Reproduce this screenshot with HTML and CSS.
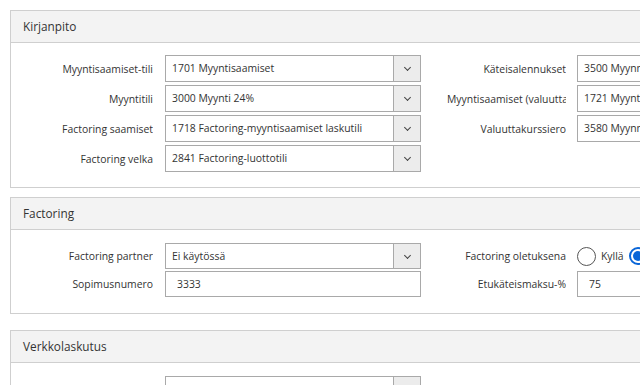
FILE: index.html
```html
<!DOCTYPE html>
<html lang="fi">
<head>
  <meta charset="UTF-8">
  <meta name="viewport" content="width=device-width, initial-scale=1.0">
  <title>Asetukset</title>
  <link rel="stylesheet" href="styles.css">
</head>
<body>
  <div class="settings">

    <!-- Kirjanpito -->
    <div class="panel">
      <div class="panel-header">Kirjanpito</div>
      <div class="panel-body">
        <div class="col">
          <div class="row">
            <label class="lbl">Myyntisaamiset-tili</label>
            <div class="select"><span class="value">1701 Myyntisaamiset</span><span class="caret"></span></div>
          </div>
          <div class="row">
            <label class="lbl">Myyntitili</label>
            <div class="select"><span class="value">3000 Myynti 24%</span><span class="caret"></span></div>
          </div>
          <div class="row">
            <label class="lbl">Factoring saamiset</label>
            <div class="select"><span class="value">1718 Factoring-myyntisaamiset laskutili</span><span class="caret"></span></div>
          </div>
          <div class="row">
            <label class="lbl">Factoring velka</label>
            <div class="select"><span class="value">2841 Factoring-luottotili</span><span class="caret"></span></div>
          </div>
        </div>
        <div class="col col-right">
          <div class="row">
            <label class="lbl">Käteisalennukset</label>
            <div class="select"><span class="value">3500 Myynn</span></div>
          </div>
          <div class="row">
            <label class="lbl">Myyntisaamiset (valuutta</label>
            <div class="select"><span class="value">1721 Myynt</span></div>
          </div>
          <div class="row">
            <label class="lbl">Valuuttakurssiero</label>
            <div class="select"><span class="value">3580 Myynn</span></div>
          </div>
        </div>
      </div>
    </div>

    <!-- Factoring -->
    <div class="panel">
      <div class="panel-header">Factoring</div>
      <div class="panel-body body-factoring">
        <div class="col">
          <div class="row">
            <label class="lbl">Factoring partner</label>
            <div class="select"><span class="value">Ei käytössä</span><span class="caret"></span></div>
          </div>
          <div class="row">
            <label class="lbl">Sopimusnumero</label>
            <input class="text-input" type="text" value="3333">
          </div>
        </div>
        <div class="col col-right">
          <div class="row">
            <label class="lbl">Factoring oletuksena</label>
            <div class="radios">
              <span class="radio"></span><span class="radio-text">Kyllä</span>
              <span class="radio checked"></span>
            </div>
          </div>
          <div class="row">
            <label class="lbl">Etukäteismaksu-%</label>
            <input class="text-input" type="text" value="75">
          </div>
        </div>
      </div>
    </div>

    <!-- Verkkolaskutus -->
    <div class="panel panel-last">
      <div class="panel-header">Verkkolaskutus</div>
      <div class="panel-body body-verkko">
        <div class="col">
          <div class="row">
            <label class="lbl"></label>
            <div class="select"><span class="value"></span><span class="caret"></span></div>
          </div>
        </div>
      </div>
    </div>

  </div>
</body>
</html>
```

FILE: styles.css
```css
html, body {
  margin: 0;
  padding: 0;
  background: #fff;
  overflow: hidden;
}
body {
  font-family: "Open Sans", "Noto Sans", sans-serif;
  font-size: 10.4px;
  color: #333;
}
.settings {
  padding: 10px 0 0 10px;
  width: 640px;
  box-sizing: border-box;
}
.panel {
  border: 1px solid #cfcfcf;
  border-right: none;
  margin-bottom: 9px;
  background: #fff;
  overflow: hidden;
}
.panel-last {
  margin-top: 16px;
}
.panel-header {
  background: #f3f3f3;
  border-bottom: 1px solid #cfcfcf;
  height: 31px;
  line-height: 30px;
  padding-left: 12px;
  font-size: 11.8px;
  color: #333;
}
.panel-body {
  display: flex;
  padding: 12px 0 15px 0;
}
.body-factoring {
  padding-top: 13px;
  padding-bottom: 16px;
}
.body-verkko {
  padding-top: 13px;
}
.col {
  display: flex;
  flex-direction: column;
  flex-shrink: 0;
  gap: 3px;
}
.col-right {
  margin-left: 26px;
}
.row {
  display: flex;
  align-items: center;
  height: 27px;
}
.body-factoring .row {
  height: 26px;
}
.body-factoring .col {
  gap: 2px;
}
.lbl {
  width: 142px;
  margin-right: 12px;
  text-align: right;
  white-space: nowrap;
  overflow: hidden;
  flex-shrink: 0;
}
.col-right .lbl {
  width: 119px;
  margin-right: 11px;
  text-align: right;
}
.select {
  display: flex;
  width: 256px;
  height: 100%;
  box-sizing: border-box;
  border: 1px solid #a9a9a9;
  background: #fff;
  flex-shrink: 0;
}
.select .value {
  flex: 1;
  padding-left: 6px;
  line-height: 25px;
  white-space: nowrap;
  overflow: hidden;
}
.caret {
  width: 26px;
  border-left: 1px solid #a9a9a9;
  background: #ececec;
  position: relative;
}
.caret::after {
  content: "";
  position: absolute;
  left: 11px;
  top: 9px;
  width: 4px;
  height: 4px;
  border-right: 1.5px solid #444;
  border-bottom: 1.5px solid #444;
  transform: rotate(45deg);
}
.text-input {
  width: 256px;
  height: 100%;
  box-sizing: border-box;
  border: 1px solid #a9a9a9;
  padding: 0 0 0 11px;
  margin: 0;
  font-family: inherit;
  font-size: 10.4px;
  color: #333;
  outline: none;
  flex-shrink: 0;
}
.radios {
  display: flex;
  align-items: center;
}
.radio {
  width: 17px;
  height: 17px;
  border: 1px solid #555;
  border-radius: 50%;
  background: #fff;
  flex-shrink: 0;
}
.radio.checked {
  width: 14px;
  height: 14px;
  border: 2.5px solid #0a66d8;
  position: relative;
}
.radio.checked::after {
  content: "";
  position: absolute;
  left: 2px;
  top: 2px;
  width: 10px;
  height: 10px;
  border-radius: 50%;
  background: #0a66d8;
}
.radio-text {
  margin: 0 5px 0 5px;
}
```
